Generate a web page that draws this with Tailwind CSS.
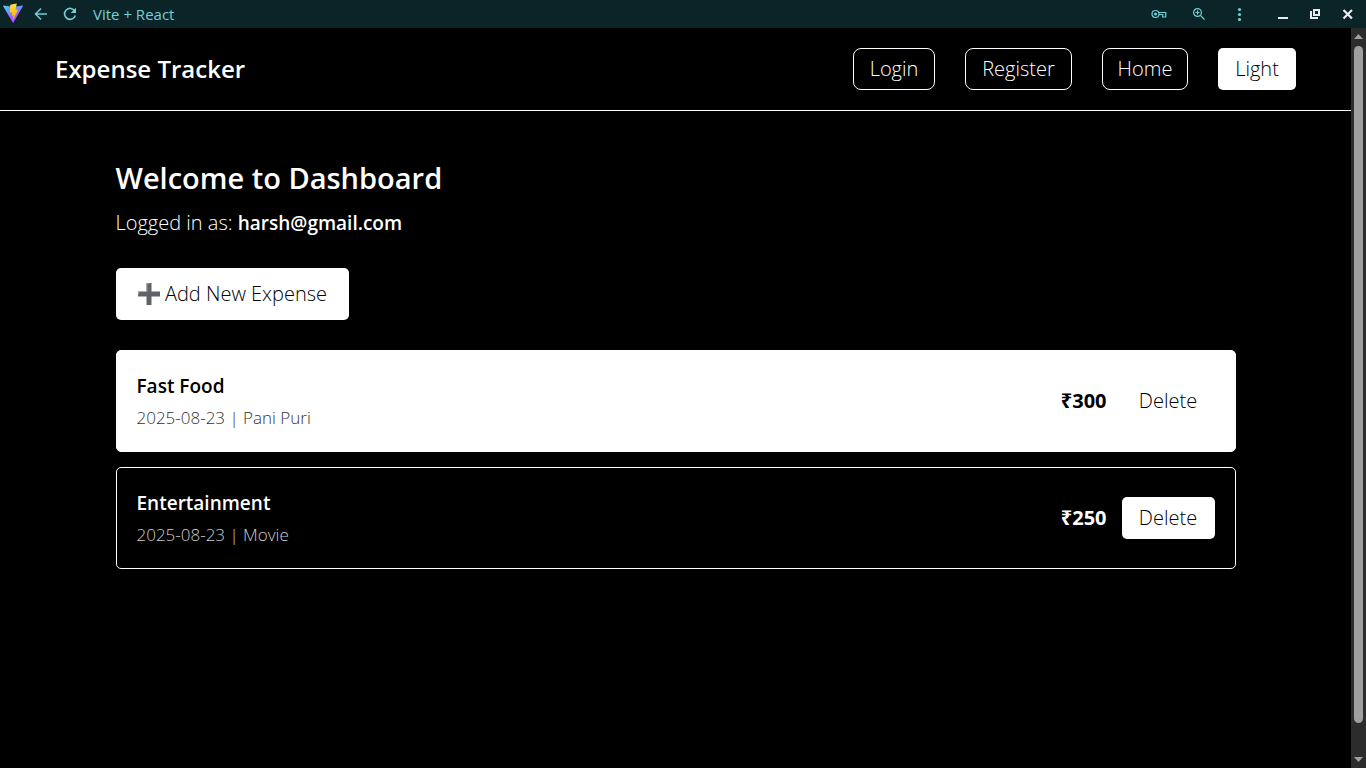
<!DOCTYPE html>
<html lang="en">
<head>
<meta charset="utf-8">
<meta name="viewport" content="width=device-width, initial-scale=1">
<title>Vite + React</title>
<script src="https://cdn.jsdelivr.net/npm/@tailwindcss/browser@4"></script>
</head>
<body class="flex h-screen flex-col overflow-hidden bg-black font-['Open_Sans','Noto_Sans',sans-serif] text-white">
  <!-- Window title bar -->
  <div class="flex h-7 shrink-0 items-center bg-[#0b2428] text-[#72d0d8]">
    <svg class="ml-[3px] h-5 w-5 -translate-y-px" viewBox="0 0 32 32" aria-hidden="true">
      <defs>
        <linearGradient id="shield" x1="0" y1="0" x2="0.6" y2="1"><stop offset="0" stop-color="#41d1ff"/><stop offset="1" stop-color="#bd34fe"/></linearGradient>
        <linearGradient id="bolt" x1="0.4" y1="0" x2="0.6" y2="1"><stop offset="0" stop-color="#ffea83"/><stop offset="0.1" stop-color="#ffdd35"/><stop offset="1" stop-color="#ffa800"/></linearGradient>
      </defs>
      <path fill="url(#shield)" d="M31.8 5 16.7 31.3q-.6.9-1.200 0L.2 5q-.5-1.200.8-1.200l15 2.700 15-2.700q1.300 0 .8 1.200z"/>
      <path fill="url(#bolt)" d="M23 .5 12 2.600q-.4.100-.4.500L10.900 15q0 .6.500.5l3.100-.7q.6-.1.500.4l-.9 4.500q-.1.600.4.500l1.900-.6q.6-.1.500.5l-1.500 7q-.1 1 .6.200l8-16.200q.2-.6-.4-.5l-3.200.6q-.6.100-.4-.5l2-9.600q.2-.7-.4-.6z"/>
    </svg>
    <button type="button" aria-label="Back" class="ml-[10px]">
      <svg class="h-4 w-4" viewBox="0 0 16 16" fill="none" stroke="currentColor" stroke-width="1.500"><path d="M14 8H3M8 2.500 2.500 8 8 13.500"/></svg>
    </button>
    <button type="button" aria-label="Reload" class="ml-[13px]">
      <svg class="h-4 w-4" viewBox="0 0 16 16"><path d="M13 5.500A5.500 5.500 0 1 0 13.300 9.500" fill="none" stroke="currentColor" stroke-width="1.600"/><path fill="currentColor" d="M14 1.700V7H8.700z"/></svg>
    </button>
    <span class="ml-[15px] text-[15px] leading-5">Vite + React</span>
    <div class="ml-auto flex items-center">
      <button type="button" aria-label="Passwords" class="mr-6">
        <svg class="h-4 w-4" viewBox="0 0 16 16" fill="none" stroke="currentColor"><circle cx="4.500" cy="8" r="3.500" stroke-width="1.200"/><circle cx="4.500" cy="8" r="1.500" fill="currentColor" stroke="none"/><path d="M7.700 6.500h7v4.500h-3V8.500H8" stroke-width="1.200"/></svg>
      </button>
      <button type="button" aria-label="Zoom" class="mr-6">
        <svg class="h-4 w-4" viewBox="0 0 16 16" fill="none" stroke="currentColor" stroke-width="1.200"><circle cx="6.500" cy="6.500" r="3.900"/><path d="M9.400 9.400 13.500 13.500M4.500 6.500h4M6.500 4.500v4"/></svg>
      </button>
      <button type="button" aria-label="Menu" class="mr-7">
        <svg class="h-4 w-4" viewBox="0 0 16 16" fill="currentColor"><circle cx="8.500" cy="3.500" r="1.600"/><circle cx="8.500" cy="8.500" r="1.600"/><circle cx="8.500" cy="13.500" r="1.600"/></svg>
      </button>
      <button type="button" aria-label="Minimize" class="mr-4 text-[#e8eaed]">
        <svg class="h-4 w-4" viewBox="0 0 16 16" fill="currentColor"><path d="M3 11h10v2H3z"/></svg>
      </button>
      <button type="button" aria-label="Restore" class="mr-4 text-[#e8eaed]">
        <svg class="h-4 w-4" viewBox="0 0 16 16" fill="none" stroke="currentColor" stroke-width="2"><path d="M7 4h5v5H7z"/><path d="M4 5v7h7"/></svg>
      </button>
      <button type="button" aria-label="Close" class="mr-[11px] text-[#e8eaed]">
        <svg class="h-4 w-4" viewBox="0 0 16 16" fill="none" stroke="currentColor" stroke-width="2.200"><path d="m4.500 4 8.500 8.500M13 4 4.500 12.500"/></svg>
      </button>
    </div>
  </div>

  <div class="flex min-h-0 flex-1">
    <div class="min-w-0 flex-1 text-xl leading-[30px] font-[350]">
      <header class="flex items-center justify-between border-b border-white py-5 pr-[55px] pl-[55px]">
        <h1 class="text-2xl leading-9 font-semibold">Expense Tracker</h1>
        <nav class="flex gap-[30px]">
          <a href="#" class="flex h-[42px] w-[82px] items-center justify-center rounded-lg border border-white">Login</a>
          <a href="#" class="flex h-[42px] w-[107px] items-center justify-center rounded-lg border border-white">Register</a>
          <a href="#" class="flex h-[42px] w-[86px] items-center justify-center rounded-lg border border-white">Home</a>
          <button type="button" class="h-[42px] w-[78px] rounded-[5px] bg-white text-black">Light</button>
        </nav>
      </header>

      <main class="mx-auto max-w-[1200px] px-10 pt-11">
        <h2 class="text-[29px] leading-[45px] font-semibold">Welcome to Dashboard</h2>
        <p class="mt-2">Logged in as: <strong class="text-[19px] font-semibold">harsh@gmail.com</strong></p>
        <button type="button" class="mt-[30px] flex h-[52px] w-[233px] items-center justify-center gap-1 rounded-[5px] bg-white text-black">
          <svg class="h-6 w-6" viewBox="0 0 24 24" aria-hidden="true"><path fill="#5f6368" d="M9.500 1h5v8.500H23v5h-8.500V23h-5v-8.500H1v-5h8.500z"/><path fill="#9b9da0" d="M9.500 1h4l-3 1v7.500h-1zM1 9.500h5l-4 1v2H1z"/></svg>
          Add New Expense
        </button>
        <ul class="mt-[30px] flex flex-col gap-[15px]">
          <li class="flex h-[102px] items-center justify-between rounded-[5px] border border-white bg-white px-5 text-black">
            <div>
              <h3 class="text-[19px] leading-[30px] font-semibold">Fast Food</h3>
              <p class="mt-1 text-[17px] leading-[26px] text-[#333]">2025-08-23 | Pani Puri</p>
            </div>
            <div class="flex items-center gap-[15px]">
              <span class="font-bold">₹300</span>
              <button type="button" class="h-[42px] w-[93px] rounded-[5px] bg-white">Delete</button>
            </div>
          </li>
          <li class="flex h-[102px] items-center justify-between rounded-[5px] border border-white px-5">
            <div>
              <h3 class="text-[19px] leading-[30px] font-semibold">Entertainment</h3>
              <p class="mt-1 text-[17px] leading-[26px] text-[#ccc]">2025-08-23 | Movie</p>
            </div>
            <div class="flex items-center gap-[15px]">
              <span class="font-bold">₹250</span>
              <button type="button" class="h-[42px] w-[93px] rounded-[5px] bg-white text-black">Delete</button>
            </div>
          </li>
        </ul>
      </main>
    </div>

    <!-- Scroll track -->
    <div class="flex w-[15px] shrink-0 flex-col items-center bg-[#2c2c2c] py-[6px]" aria-hidden="true">
      <svg class="h-[5px] w-[9px] shrink-0" viewBox="0 0 9 5" fill="#a0a0a0"><path d="M4.500 0 9 5H0z"/></svg>
      <div class="mt-[7px] mb-[34px] w-[9px] flex-1 rounded-full bg-[#9f9f9f]"></div>
      <svg class="h-[5px] w-[9px] shrink-0" viewBox="0 0 9 5" fill="#a0a0a0"><path d="M0 0h9L4.500 5z"/></svg>
    </div>
  </div>
</body>
</html>
